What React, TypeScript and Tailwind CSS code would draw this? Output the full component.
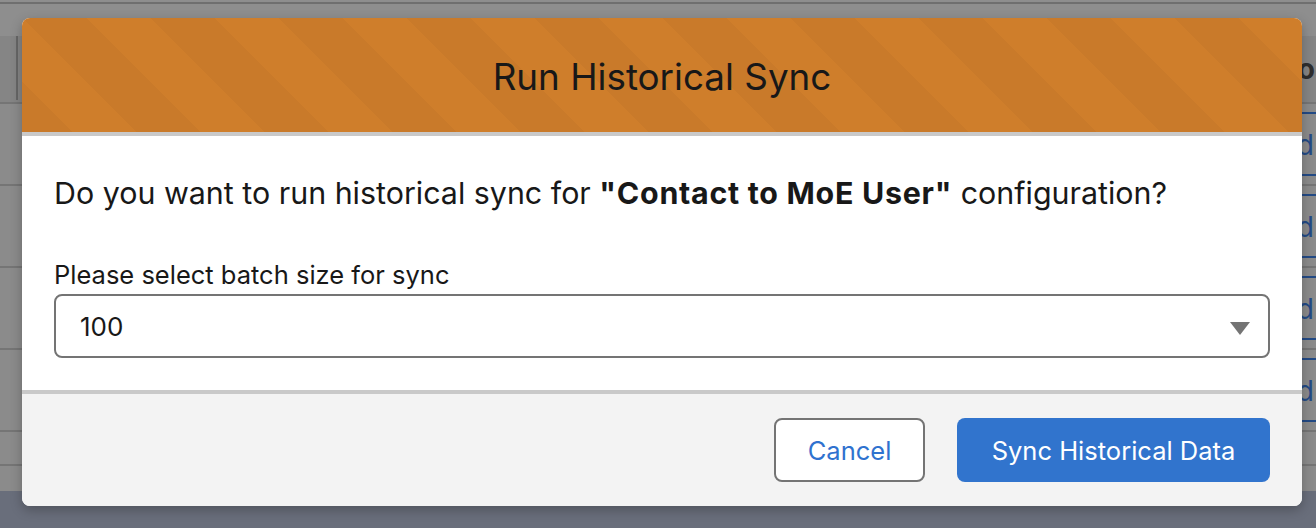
import React from "react";

const rows = [0, 1, 2, 3];

export default function App() {
  return (
    <div className="relative h-[528px] w-[1316px] overflow-hidden bg-[#696e7b] [font-family:Inter,'Liberation_Sans',sans-serif]">
      {/* Page dimmed behind the modal */}
      <div className="h-[491px] bg-[#8b8b8b]">
        <div className="h-[36px] pt-[2px] bg-[#8e8e8e]">
          <div className="h-[2px] bg-[#6f6f6f]" />
        </div>
        <div className="flex h-[68px] items-start justify-between overflow-hidden border-b-2 border-[#757575] bg-[#858585] pl-[16px]">
          <div className="h-[64px] w-[2px] bg-[#666666]" />
          <span className="mt-[16px] pr-[1px] text-[28px] font-bold leading-[34px] text-[#2e2e2e]">o</span>
        </div>
        {rows.map((r) => (
          <div key={r} className="flex h-[82px] items-center justify-end border-b-2 border-[#757575]">
            <div className="flex h-[64px] w-[60px] items-center justify-end border-y-2 border-[#234a85] pr-[2px] pt-[2px] text-[28px] leading-[34px] text-[#234a85]">
              d
            </div>
          </div>
        ))}
        <div className="h-[34px] border-b-2 border-[#757575]" />
      </div>

      {/* Modal */}
      <div className="absolute inset-0 pl-[22px] pt-[18px]">
        <div className="flex h-[488px] w-[1280px] flex-col overflow-hidden rounded-[8px] bg-white shadow-[0_4px_12px_rgba(0,0,0,0.25)]">
          <div className="flex h-[118px] shrink-0 items-center justify-center border-b-4 border-[#c9c9c9] bg-[#cf7e2b] bg-[linear-gradient(45deg,rgba(0,0,0,.03)_25%,transparent_25%,transparent_50%,rgba(0,0,0,.03)_50%,rgba(0,0,0,.03)_75%,transparent_75%,transparent)] bg-[length:128px_128px] pt-[4px]">
            <h2 className="text-[36.8px] font-normal leading-[44px] text-[#181818]">Run Historical Sync</h2>
          </div>
          <div className="flex h-[254px] shrink-0 flex-col px-[32px] pt-[38px]">
            <p className="whitespace-nowrap text-[30.4px] leading-[38px] text-[#181818]">
              Do you want to run historical sync for <b className="font-bold tracking-[0.72px]">"Contact to MoE User"</b> configuration?
            </p>
            <label className="mt-[45px] text-[25.5px] leading-[36px] text-[#181818]">Please select batch size for sync</label>
            <div className="relative mt-[1px]">
              <select
                defaultValue="100"
                className="h-[64px] w-full appearance-none rounded-[8px] border-2 border-[#747474] bg-white pl-[24px] pt-[1px] text-[26px] text-[#181818] outline-none"
              >
                <option value="100">100</option>
              </select>
              <svg className="absolute right-[20px] top-[28px] h-[13px] w-[20px]" viewBox="0 0 20 13" aria-hidden="true">
                <path d="M0 0H20L10 13Z" fill="#747474" />
              </svg>
            </div>
          </div>
          <div className="flex flex-1 items-start justify-end gap-[32px] border-t-4 border-[#c9c9c9] bg-[#f3f3f3] px-[32px] pt-[24px]">
            <button className="h-[64px] w-[151px] rounded-[8px] border-2 border-[#747474] bg-white pt-[2px] text-[25.5px] text-[#2f72cf]">Cancel</button>
            <button className="h-[64px] w-[313px] rounded-[8px] bg-[#3174cd] pt-[2px] text-[25.5px] text-white">Sync Historical Data</button>
          </div>
        </div>
      </div>
    </div>
  );
}
